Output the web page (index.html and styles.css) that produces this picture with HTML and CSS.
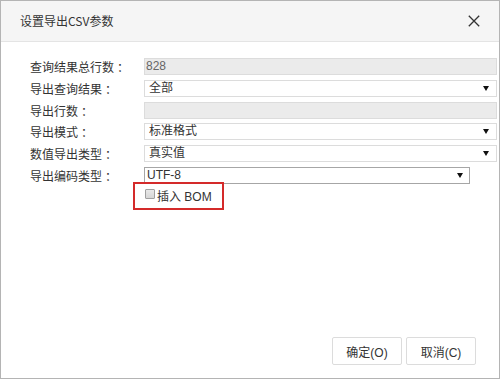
FILE: index.html
```html
<!DOCTYPE html>
<html lang="zh-CN">
<head>
    <meta charset="UTF-8">
    <title>设置导出CSV参数</title>
    <link rel="stylesheet" href="styles.css">
</head>
<body>
    <div class="dialog">
        <div class="dialog-header">
            <span class="dialog-title">设置导出CSV参数</span>
            <span class="close-btn">
                <svg width="12" height="12" viewBox="0 0 12 12"><path d="M0.8 0.8 L11.2 11.2 M11.2 0.8 L0.8 11.2" stroke="#333" stroke-width="1.3" fill="none"/></svg>
            </span>
        </div>

        <div class="form">
            <label>查询结果总行数<span class="colon">：</span></label>
            <div class="field disabled">828</div>

            <label>导出查询结果<span class="colon">：</span></label>
            <div class="field select">全部<svg class="arrow" width="6" height="5" viewBox="0 0 6 5"><polygon points="0,0 6,0 3,5" fill="#111"/></svg></div>

            <label>导出行数<span class="colon">：</span></label>
            <div class="field disabled"></div>

            <label>导出模式<span class="colon">：</span></label>
            <div class="field select">标准格式<svg class="arrow" width="6" height="5" viewBox="0 0 6 5"><polygon points="0,0 6,0 3,5" fill="#111"/></svg></div>

            <label>数值导出类型<span class="colon">：</span></label>
            <div class="field select">真实值<svg class="arrow" width="6" height="5" viewBox="0 0 6 5"><polygon points="0,0 6,0 3,5" fill="#111"/></svg></div>

            <label>导出编码类型<span class="colon">：</span></label>
            <div class="field select native">UTF-8<svg class="arrow" width="6" height="5" viewBox="0 0 6 5"><polygon points="0,0 6,0 3,5" fill="#111"/></svg></div>

            <div class="bom-option">
                <span class="checkbox"></span>
                <span>插入 BOM</span>
            </div>
        </div>

        <div class="dialog-footer">
            <button>确定(O)</button>
            <button>取消(C)</button>
        </div>
    </div>
</body>
</html>
```

FILE: styles.css
```css
* {
    box-sizing: border-box;
}
body {
    margin: 0;
    font-family: "Liberation Sans", "Noto Sans CJK SC", sans-serif;
    font-size: 12px;
    color: #333;
    background: #fff;
}
.dialog {
    width: 500px;
    height: 379px;
    border: 1px solid #b4b4b4;
    display: flex;
    flex-direction: column;
    background: #fff;
}
.dialog-header {
    height: 41px;
    background: #f5f5f5;
    border-bottom: 1px solid #e4e4e4;
    display: flex;
    align-items: center;
    justify-content: space-between;
    padding: 0 19px 0 19px;
}
.dialog-title {
    font-family: "Noto Sans CJK SC", sans-serif;
    font-size: 12px;
    color: #333;
    line-height: 16px;
}
.close-btn {
    display: flex;
    width: 12px;
    height: 12px;
}
.form {
    display: grid;
    grid-template-columns: 114px 1fr;
    row-gap: 4.8px;
    padding: 16px 2px 0 29px;
}
.form label {
    height: 17px;
    line-height: 17px;
    color: #333;
    font-family: "Noto Sans CJK SC", sans-serif;
    font-size: 12px;
}
.colon {
    margin-left: 3px;
}
.field {
    height: 17px;
    border: 1px solid #dcdcdc;
    line-height: 15px;
    padding: 0 1px;
    display: flex;
    align-items: center;
    color: #333;
}
.field.disabled {
    background: #ebebeb;
    color: #666;
}
.field.select {
    padding: 0 7px 0 4px;
    justify-content: space-between;
    background: #fff;
}
.field.native {
    width: 326px;
    border-color: #a6a6a6;
    padding: 0 6px 0 2px;
}
.arrow {
    flex-shrink: 0;
}
.bom-option {
    grid-column: 2;
    margin: -7px 0 0 -11px;
    width: 91px;
    height: 28px;
    border: 2px solid #d42a2a;
    display: flex;
    align-items: center;
    padding-left: 10px;
    gap: 2px;
    font-size: 12px;
}
.checkbox {
    width: 10px;
    height: 10px;
    border: 1px solid #a0a0a0;
    border-radius: 1px;
    background: linear-gradient(#e8e8e8, #d6d6d6);
    margin-bottom: 4px;
}
.dialog-footer {
    margin-top: auto;
    display: flex;
    justify-content: flex-end;
    gap: 4px;
    padding: 0 23px 13px 0;
}
.dialog-footer button {
    width: 70px;
    height: 28px;
    border: 1px solid #dcdcdc;
    border-radius: 2px;
    background: #fff;
    color: #333;
    font-family: "Liberation Sans", "Noto Sans CJK SC", sans-serif;
    font-size: 12px;
    padding: 0;
}
```
